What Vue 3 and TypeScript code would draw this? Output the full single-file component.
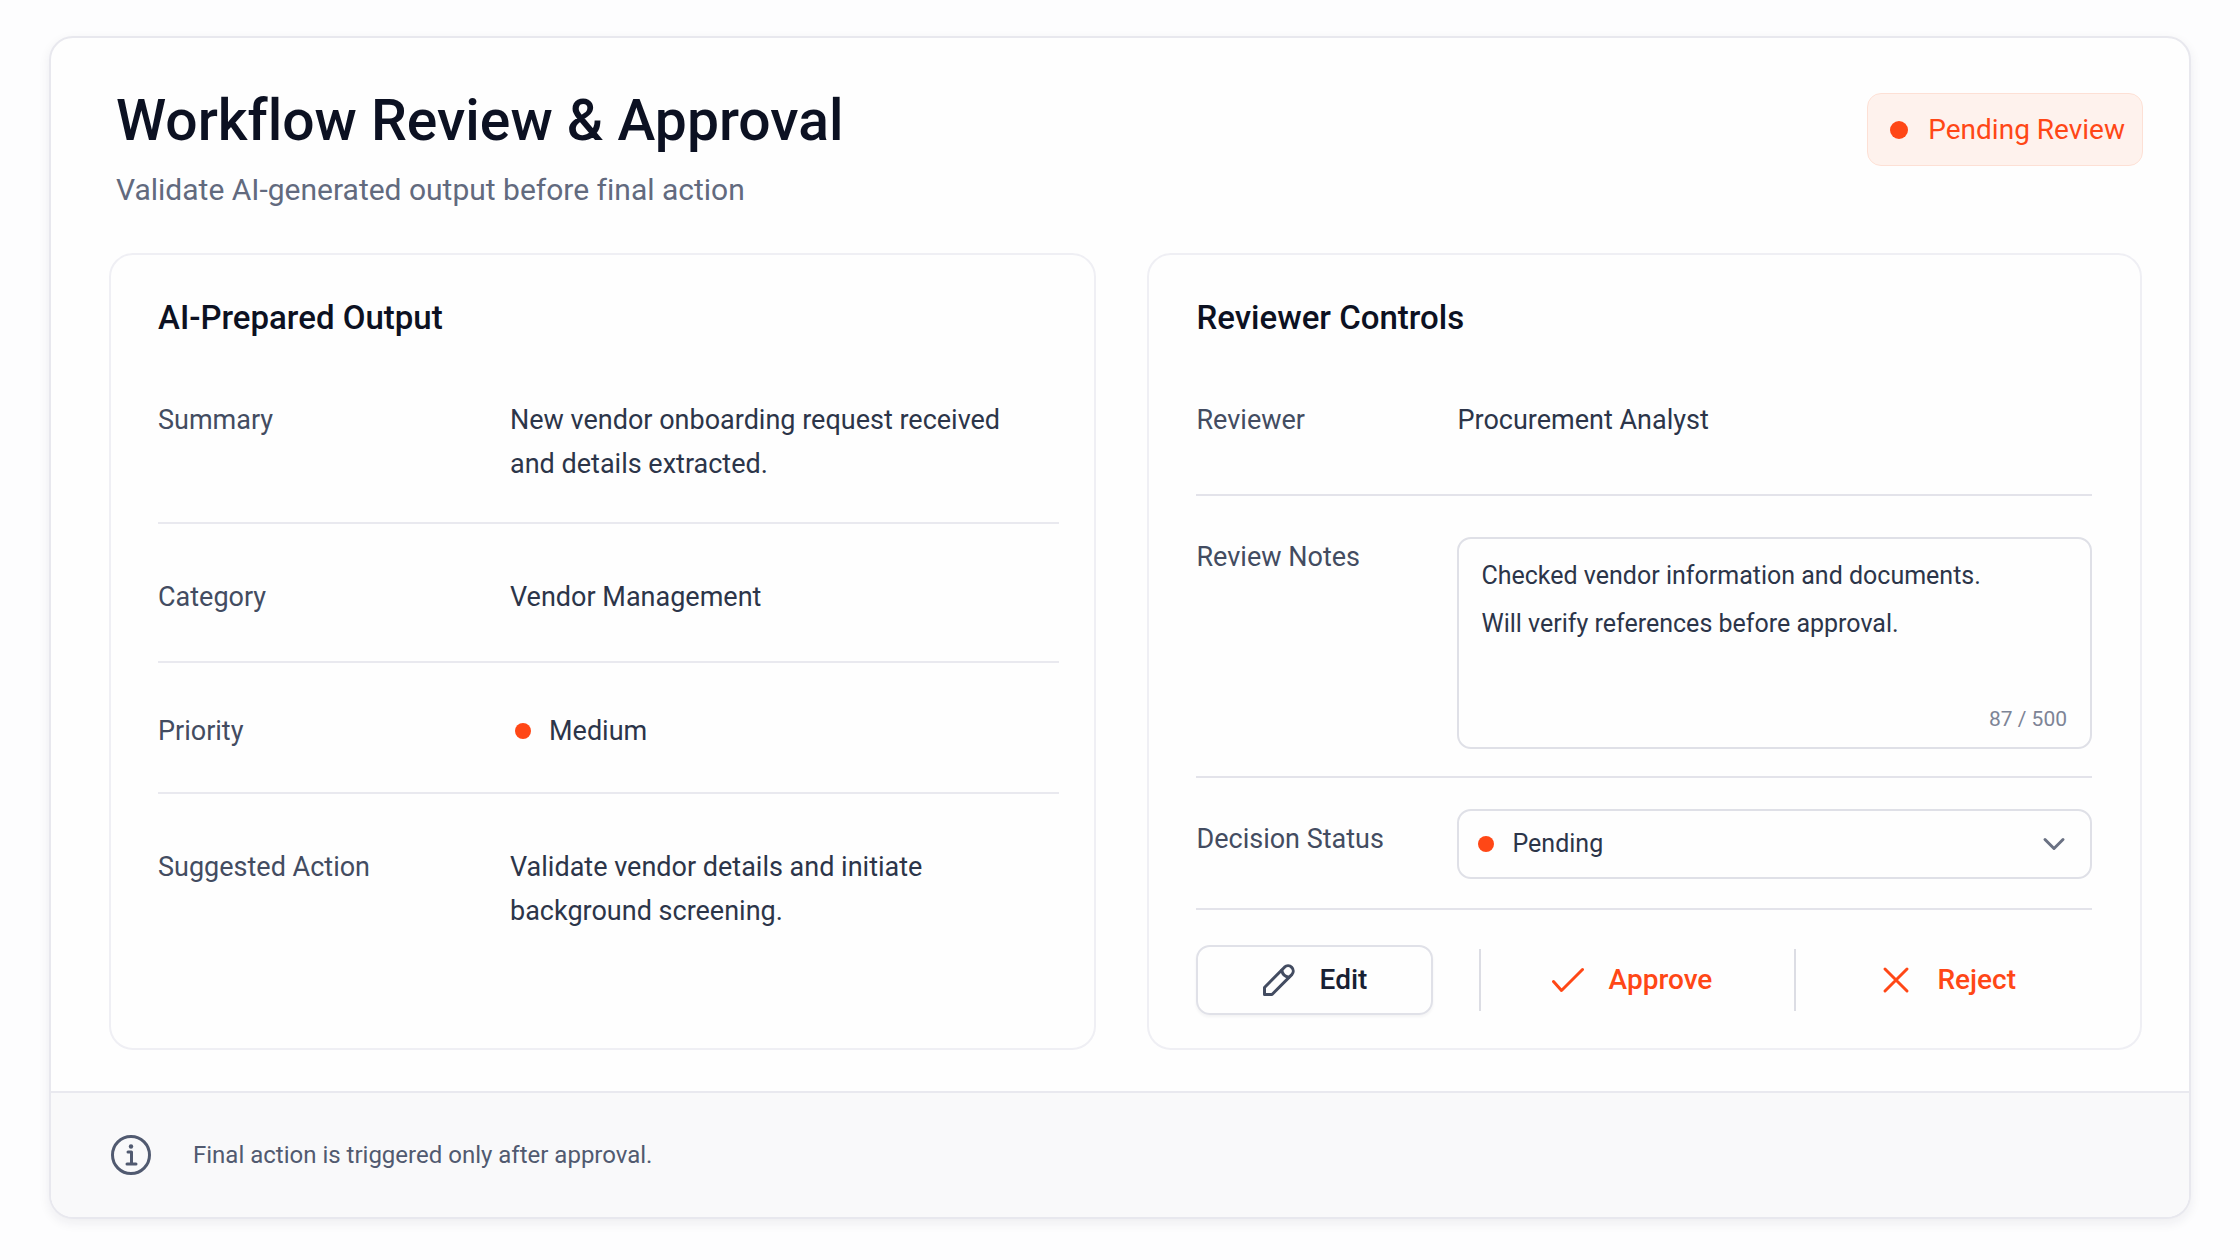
<script setup lang="ts">
import { ref } from 'vue'

interface OutputRow {
  key: string
  label: string
  lines: string[]
  dot?: boolean
}

const rows: OutputRow[] = [
  { key: 'summary', label: 'Summary', lines: ['New vendor onboarding request received', 'and details extracted.'] },
  { key: 'category', label: 'Category', lines: ['Vendor Management'] },
  { key: 'priority', label: 'Priority', lines: ['Medium'], dot: true },
  { key: 'action', label: 'Suggested Action', lines: ['Validate vendor details and initiate', 'background screening.'] },
]

const notes = ref('Checked vendor information and documents.\nWill verify references before approval.')
const decision = ref('Pending')
</script>

<template>
  <main class="page">
    <article class="card">
      <header class="header">
        <div>
          <h1 class="title">Workflow Review &amp; Approval</h1>
          <p class="subtitle">Validate AI-generated output before final action</p>
        </div>
        <div class="badge"><span class="dot dot-large"></span>Pending Review</div>
      </header>

      <div class="panels">
        <section class="panel output">
          <h2 class="heading">AI-Prepared Output</h2>
          <dl class="rows">
            <div v-for="row in rows" :key="row.key" class="row" :class="row.key">
              <dt class="label">{{ row.label }}</dt>
              <dd class="value">
                <span v-if="row.dot" class="dot"></span>
                <span><template v-for="(line, i) in row.lines" :key="line"><br v-if="i > 0" />{{ line }}</template></span>
              </dd>
            </div>
          </dl>
        </section>

        <section class="panel controls">
          <h2 class="heading">Reviewer Controls</h2>
          <div class="field reviewer">
            <span class="label">Reviewer</span>
            <span class="value">Procurement Analyst</span>
          </div>
          <div class="field notes">
            <label class="label" for="notes">Review Notes</label>
            <div class="control">
              <textarea id="notes" v-model="notes" class="textarea" maxlength="500" spellcheck="false"></textarea>
              <span class="counter">87 / 500</span>
            </div>
          </div>
          <div class="field decision">
            <label class="label" for="decision">Decision Status</label>
            <div class="control">
              <span class="dot select-dot"></span>
              <select id="decision" v-model="decision" class="select">
                <option>Pending</option>
                <option>Approved</option>
                <option>Rejected</option>
              </select>
              <svg class="chevron" viewBox="0 0 24 24" aria-hidden="true"><path d="M3 7.500 12 16.500l9-9" /></svg>
            </div>
          </div>
          <div class="actions">
            <button type="button" class="button edit">
              <svg class="icon" viewBox="0 0 32 32" aria-hidden="true">
                <path d="M1.500 30.500v-7L21.500 3.200a5.200 5.200 0 0 1 7.300 7.400L9 30.500z" />
                <path d="M18.800 6.200c.6 3.800 3.200 6.400 7 7" />
              </svg>
              Edit
            </button>
            <button type="button" class="button approve">
              <svg class="icon" viewBox="0 0 32 32" aria-hidden="true"><path d="M1.500 17.500 9.500 26.500 30.500 5.500" /></svg>
              Approve
            </button>
            <button type="button" class="button reject">
              <svg class="icon" viewBox="0 0 32 32" aria-hidden="true"><path d="M5 5 27 27M27 5 5 27" /></svg>
              Reject
            </button>
          </div>
        </section>
      </div>

      <footer class="footer">
        <svg class="info" viewBox="0 0 40 40" aria-hidden="true">
          <circle cx="20" cy="20" r="18.500" />
          <path d="M17 17h3.500v12M16 29h9" />
          <circle class="info-dot" cx="20" cy="11.500" r="2.200" />
        </svg>
        <span>Final action is triggered only after approval.</span>
      </footer>
    </article>
  </main>
</template>

<style>
body {
  background: #fdfdfe;
}
</style>

<style scoped>
* {
  box-sizing: border-box;
}

.page {
  padding: 36px 49px 40px;
  font-family: Roboto, "Liberation Sans", sans-serif;
  font-size: 27px;
  line-height: 44px;
  font-variant-ligatures: none;
  color: #2c3549;
}

.card {
  border: 2px solid #e8e8ee;
  border-radius: 24px;
  background: #fefefe;
  box-shadow: 0 4px 12px rgba(30, 35, 60, 0.07);
  overflow: hidden;
}

.header {
  display: flex;
  justify-content: space-between;
  align-items: flex-start;
  padding: 47px 46px 0 65px;
}

.title {
  margin: 0 0 13px;
  font-size: 57px;
  line-height: 72px;
  font-weight: 500;
  color: #0c1122;
}

.subtitle {
  margin: 0;
  font-size: 30px;
  line-height: 40px;
  color: #626a7e;
}

.badge {
  display: flex;
  align-items: center;
  gap: 20px;
  margin-top: 8px;
  padding: 14px 17px 13px 22px;
  border: 1px solid #fde0d5;
  border-radius: 14px;
  background: #fef2ed;
  font-size: 28px;
  color: #ff4716;
}

.dot {
  flex: none;
  width: 16px;
  height: 16px;
  border-radius: 50%;
  background: #ff4716;
}

.dot-large {
  width: 18px;
  height: 18px;
}

.panels {
  display: grid;
  grid-template-columns: 987fr 994fr;
  gap: 51px;
  padding: 43px 47px 41px 58px;
}

.panel {
  padding: 41px 48px 33px 47px;
  border: 2px solid #efeff4;
  border-radius: 24px;
}

.output {
  padding-right: 35px;
}

.heading {
  margin: 0 0 58px;
  font-size: 33px;
  line-height: 44px;
  font-weight: 500;
  color: #0c1122;
}

.rows {
  margin: 0;
}

.row {
  display: grid;
  grid-template-columns: 352px 1fr;
  border-bottom: 2px solid #e9e9ef;
}

.label {
  color: #434c61;
}

.value {
  display: flex;
  align-items: center;
  gap: 18px;
  margin: 0;
}

.value .dot {
  margin-left: 5px;
}

.summary {
  padding-bottom: 36px;
}

.category {
  padding: 51px 0 42px;
}

.priority {
  padding: 46px 0 39px;
}

.action {
  padding-top: 51px;
  border-bottom: 0;
}

.field {
  display: grid;
  grid-template-columns: 261px 1fr;
  border-bottom: 2px solid #e3e3ea;
}

.reviewer {
  padding-bottom: 52px;
}

.notes {
  padding: 41px 0 27px;
}

.notes .label {
  line-height: 40px;
}

.decision {
  padding: 31px 0 29px;
}

.decision .label {
  padding-top: 8px;
}

.control {
  position: relative;
  display: flex;
}

.textarea,
.select {
  width: 100%;
  border: 2px solid #dfe0e7;
  border-radius: 14px;
  background: transparent;
  font: inherit;
  font-size: 25px;
  color: inherit;
  outline: none;
}

.textarea {
  height: 212px;
  padding: 13px 22px;
  line-height: 48px;
  resize: none;
}

.counter {
  position: absolute;
  right: 25px;
  bottom: 14px;
  font-size: 21px;
  line-height: 32px;
  color: #7d8496;
}

.select {
  height: 70px;
  padding: 0 53px;
  appearance: none;
}

.select-dot {
  position: absolute;
  left: 21px;
  top: 27px;
}

.chevron {
  position: absolute;
  right: 26px;
  top: 23px;
  width: 24px;
  height: 24px;
  fill: none;
  stroke: #6a7183;
  stroke-width: 3;
  stroke-linecap: round;
  stroke-linejoin: round;
  pointer-events: none;
}

.actions {
  display: grid;
  grid-template-columns: 237px 46px 315px 1fr;
  align-items: center;
  padding-top: 35px;
}

.button {
  display: flex;
  align-items: center;
  justify-content: center;
  gap: 25px;
  height: 62px;
  border: 0;
  background: none;
  font: inherit;
  font-size: 28px;
  font-weight: 500;
  color: #ff4716;
}

.edit {
  height: 70px;
  padding: 0;
  border: 2px solid #e0e1e8;
  border-radius: 14px;
  box-shadow: 0 2px 3px rgba(30, 35, 60, 0.05);
  color: #182033;
}

.approve {
  grid-column: 3;
  padding: 0 12px 0 0;
  border-left: 2px solid #dcdde4;
}

.reject {
  padding: 0 0 0 8px;
  border-left: 2px solid #dcdde4;
}

.icon {
  width: 32px;
  height: 32px;
  fill: none;
  stroke: currentColor;
  stroke-width: 3;
  stroke-linecap: round;
  stroke-linejoin: round;
}

.edit .icon {
  stroke: #434c61;
}

.footer {
  display: flex;
  align-items: center;
  gap: 42px;
  padding: 40px 60px;
  border-top: 2px solid #e9e9ef;
  background: #f9f9fa;
  font-size: 24px;
  color: #515a70;
}

.info {
  width: 40px;
  height: 40px;
  fill: none;
  stroke: #515a70;
  stroke-width: 3;
  stroke-linecap: round;
  stroke-linejoin: round;
}

.info-dot {
  fill: #515a70;
  stroke: none;
}
</style>
